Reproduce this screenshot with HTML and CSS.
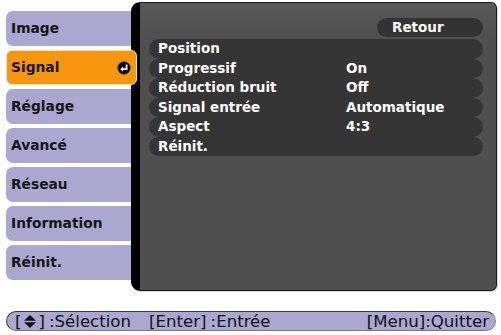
FILE: index.html
```html
<!DOCTYPE html>
<html lang="fr">
<head>
    <meta charset="UTF-8">
    <title>Signal</title>
    <link rel="stylesheet" href="styles.css">
</head>
<body>
    <div class="screen">
        <div class="tabs">
            <div class="tab">Image</div>
            <div class="tab active">
                <span>Signal</span>
                <svg class="enter-icon" width="14" height="14" viewBox="0 0 14 14">
                    <circle cx="7" cy="7" r="6.5" fill="#000"/>
                    <path d="M9.6 3.4 V8.2 H5.6" fill="none" stroke="#fff" stroke-width="1.8"/>
                    <path d="M3.2 8.2 L6.2 5.6 V10.8 Z" fill="#fff"/>
                </svg>
            </div>
            <div class="tab">Réglage</div>
            <div class="tab">Avancé</div>
            <div class="tab">Réseau</div>
            <div class="tab">Information</div>
            <div class="tab">Réinit.</div>
        </div>

        <div class="panel">
            <div class="panel-head">
                <div class="back-btn">Retour</div>
            </div>
            <div class="rows">
                <div class="row"><span class="label">Position</span><span class="value"></span></div>
                <div class="row"><span class="label">Progressif</span><span class="value">On</span></div>
                <div class="row"><span class="label">Réduction bruit</span><span class="value">Off</span></div>
                <div class="row"><span class="label">Signal entrée</span><span class="value">Automatique</span></div>
                <div class="row"><span class="label">Aspect</span><span class="value">4:3</span></div>
                <div class="row"><span class="label">Réinit.</span><span class="value"></span></div>
            </div>
        </div>
    </div>

    <div class="footer">
        <span class="hint">[<svg class="updown" width="12" height="13" viewBox="0 0 12 13"><path d="M6 0 L12 5.8 H0 Z M0 7.2 H12 L6 13 Z" fill="#111"/></svg>]<span class="sep">:</span>Sélection</span>
        <span class="hint">[Enter]<span class="sep">:</span>Entrée</span>
        <span class="hint right">[Menu]:Quitter</span>
    </div>
</body>
</html>
```

FILE: styles.css
```css
* {
    margin: 0;
    padding: 0;
    box-sizing: border-box;
}

body {
    font-family: 'DejaVu Sans', Verdana, sans-serif;
    background: #fff;
    width: 501px;
    height: 335px;
    overflow: hidden;
    color: #111;
}

.screen {
    display: flex;
    padding-top: 2px;
    height: 291px;
}

.tabs {
    width: 125px;
    margin-left: 6px;
    padding-top: 9px;
    display: flex;
    flex-direction: column;
    gap: 4px;
}

.tab {
    height: 35px;
    line-height: 35px;
    padding-left: 5px;
    background: #aaa7d1;
    border-radius: 7px 0 0 7px;
    font-size: 13.8px;
    font-weight: bold;
    color: #151515;
}

.tab.active {
    position: relative;
    z-index: 2;
    width: 131px;
    display: flex;
    align-items: center;
    justify-content: space-between;
    padding-right: 5px;
    background: #f7960f;
    border: 1px solid #ffe3a8;
    border-radius: 6px;
    padding-left: 4px;
}

.enter-icon {
    display: block;
}

.panel {
    flex: 1;
    margin-right: 4px;
    height: 289px;
    background: linear-gradient(#585858, #4f4f4f 40px, #4f4f4f);
    border: 1px solid #1a1a1a;
    border-left: 9px solid #000;
    border-radius: 9px 6px 6px 9px;
    box-shadow: 1px 1px 0 #d8d8d8;
    padding: 15px 13px 0 9px;
}

.panel-head {
    display: flex;
    justify-content: flex-end;
}

.back-btn {
    width: 106px;
    height: 19px;
    line-height: 19px;
    padding-left: 15px;
    background: #333;
    border-radius: 10px;
    color: #fff;
    font-size: 13.5px;
    font-weight: bold;
}

.rows {
    margin-top: 2px;
}

.row {
    display: flex;
    height: 19.5px;
    line-height: 19.5px;
    padding-left: 9px;
    background: #353535;
    border-radius: 10px;
    color: #fff;
    font-size: 13.5px;
    font-weight: bold;
}

.label {
    width: 188px;
}

.footer {
    display: flex;
    align-items: center;
    margin: 20px 5px 0 6px;
    height: 20px;
    padding: 0 6px 0 8px;
    background: #aaa7d1;
    border: 1px solid #3a3a3a;
    border-right-color: #888;
    border-bottom-color: #777;
    border-radius: 10px;
    font-size: 16.6px;
    color: #111;
}

.hint {
    white-space: nowrap;
    margin-right: 18px;
}

.hint .sep {
    margin-left: 4px;
}

.hint.right {
    margin-left: auto;
    margin-right: 0;
}

.updown {
    vertical-align: -1px;
    margin: 0 2px 0 3px;
}
```
